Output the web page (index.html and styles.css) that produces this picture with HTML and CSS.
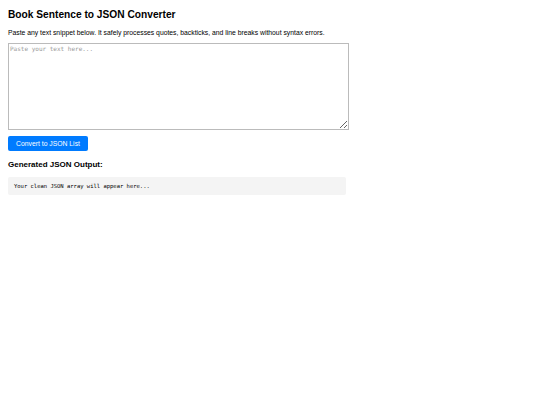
FILE: index.html
```html
<!DOCTYPE html>
<html lang="en">
<head>
    <meta charset="UTF-8">
    <meta name="viewport" content="width=device-width, initial-scale=1.0">
    <title>Book Sentence to JSON Converter</title>
    <link rel="stylesheet" href="styles.css">
</head>
<body>

    <!-- Converter -->
    <div class="converter">
        <h2>Book Sentence to JSON Converter</h2>
        <p class="intro">Paste any text snippet below. It safely processes quotes, backticks, and line breaks without syntax errors.</p>

        <textarea id="inputText" placeholder="Paste your text here..."></textarea>

        <button id="convertButton">Convert to JSON List</button>

        <h3>Generated JSON Output:</h3>
        <pre id="output">Your clean JSON array will appear here...</pre>
    </div>

</body>
</html>
```

FILE: styles.css
```css
/* Page */
body {
    margin: 8px;
    font-family: "Liberation Sans", Arial, sans-serif;
    color: #000;
    background-color: #fff;
}

.converter {
    display: flex;
    flex-direction: column;
    align-items: flex-start;
}

.converter h2 {
    font-size: 10.2px;
    margin: 1px 0 0;
    line-height: 12px;
}

.intro {
    font-size: 6.8px;
    margin: 8px 0 0;
    line-height: 8px;
}

/* Input */
#inputText {
    box-sizing: border-box;
    width: 341px;
    height: 87px;
    margin-top: 6px;
    padding: 1px 1px;
    border: 1px solid #bbb;
    font-family: "DejaVu Sans Mono", monospace;
    font-size: 6px;
}
#inputText::placeholder {
    color: #999;
}

#convertButton {
    margin-top: 6px;
    width: 80px;
    height: 15px;
    padding: 0;
    background-color: #007bff;
    color: white;
    border: none;
    border-radius: 2px;
    font-family: "Liberation Sans", Arial, sans-serif;
    font-size: 6.8px;
    cursor: pointer;
}

.converter h3 {
    font-size: 8px;
    margin: 9px 0 0;
    line-height: 10px;
}

/* Output */
#output {
    box-sizing: border-box;
    width: 338px;
    height: 18px;
    margin: 7px 0 0;
    padding: 0 6px;
    background-color: #f4f4f4;
    border-radius: 2px;
    font-family: "DejaVu Sans Mono", monospace;
    font-size: 5.5px;
    line-height: 18px;
}
```
